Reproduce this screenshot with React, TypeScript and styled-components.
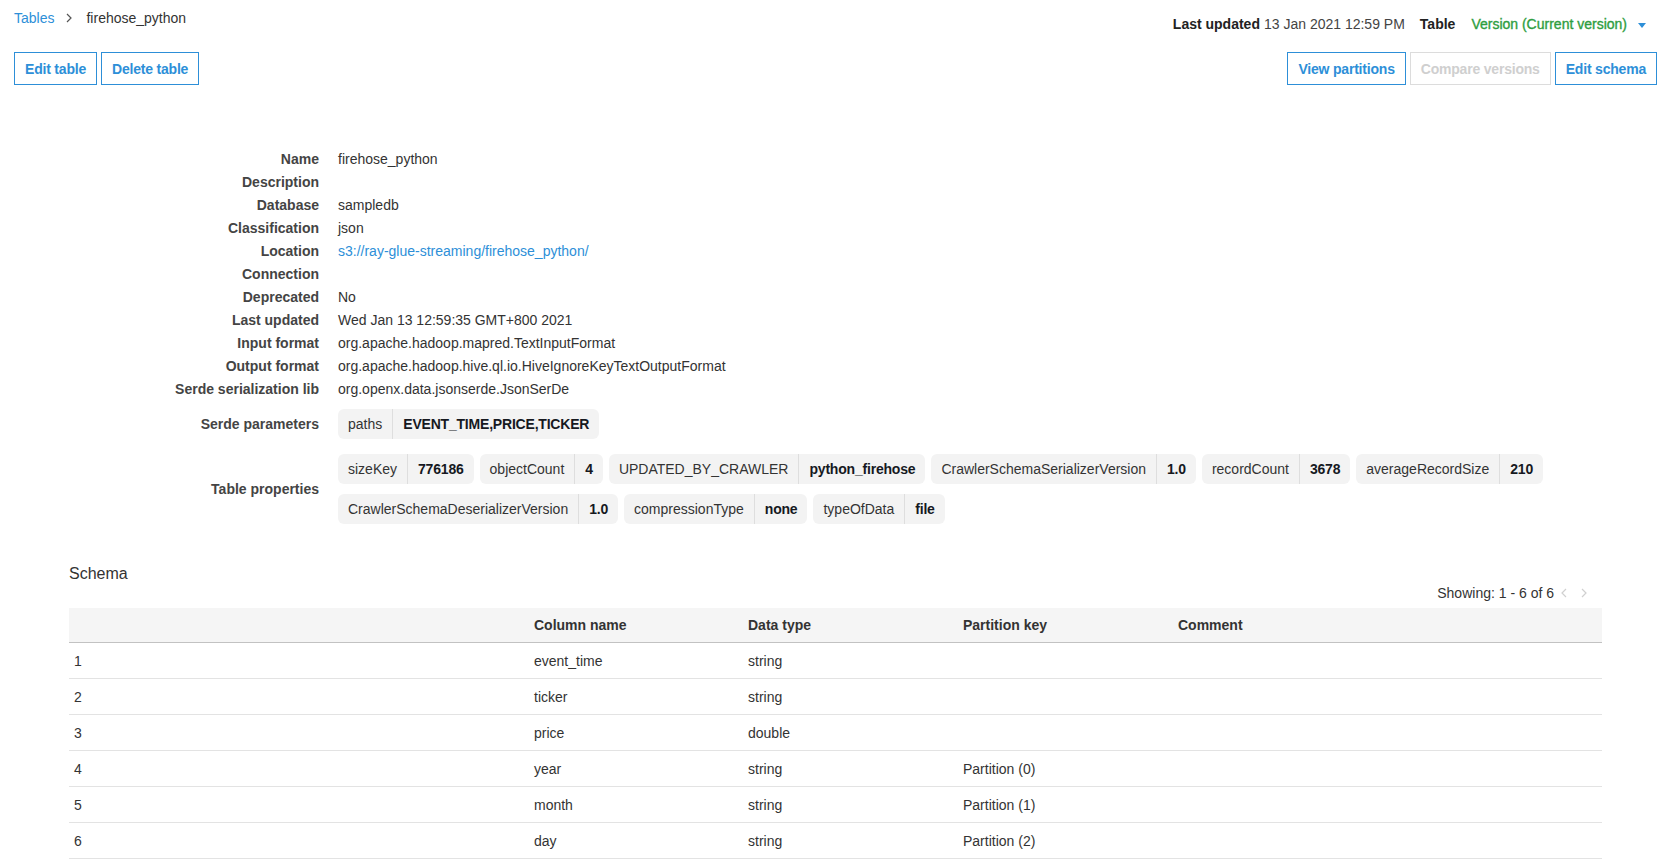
import React from 'react';
import styled, { createGlobalStyle } from 'styled-components';

const GlobalStyle = createGlobalStyle`
  html, body {
    margin: 0;
    padding: 0;
    background: #fff;
  }
  body {
    font-family: "Liberation Sans", Arial, sans-serif;
    font-size: 14px;
    color: #333;
  }
`;

const BLUE = '#2d8fd8';

const Page = styled.div`
  padding: 0 10px 0 14px;
`;

const TopBar = styled.div`
  display: flex;
  justify-content: space-between;
  align-items: flex-start;
`;

const Breadcrumb = styled.div`
  display: flex;
  align-items: center;
  padding-top: 10px;
  line-height: 16px;
`;

const Crumb = styled.a`
  color: ${BLUE};
  text-decoration: none;
`;

const CrumbSep = styled.span`
  display: inline-flex;
  margin: 0 14px 0 12px;
`;

const Current = styled.span`
  color: #333;
`;

const Meta = styled.div`
  display: flex;
  align-items: center;
  padding: 16px 11px 0 0;
  line-height: 16px;
  color: #444;
`;

const MetaItem = styled.span<{ $gap?: number }>`
  margin-left: ${p => p.$gap ?? 0}px;
`;

const Strong = styled.b`
  color: #222;
  font-weight: bold;
`;

const VersionPick = styled.span`
  color: #2e9e3f;
  -webkit-text-stroke: 0.35px #2e9e3f;
  margin-left: 16px;
  display: inline-flex;
  align-items: center;
`;

const Caret = styled.span`
  display: inline-block;
  margin-left: 11px;
  width: 0;
  height: 0;
  border-left: 4.5px solid transparent;
  border-right: 4.5px solid transparent;
  border-top: 5px solid ${BLUE};
  margin-top: 2px;
`;

const Actions = styled.div`
  display: flex;
  justify-content: space-between;
  margin-top: 20px;
`;

const ButtonGroup = styled.div`
  display: flex;
  gap: 4px;
`;

const Button = styled.button<{ $disabled?: boolean }>`
  height: 33px;
  padding: 0 10px;
  background: #fff;
  font-family: inherit;
  font-size: 14px;
  font-weight: bold;
  letter-spacing: -0.2px;
  color: ${p => (p.$disabled ? '#cfcfcf' : BLUE)};
  border: 1px solid ${p => (p.$disabled ? '#dcdcdc' : BLUE)};
  border-radius: 0;
  cursor: ${p => (p.$disabled ? 'default' : 'pointer')};
`;

const Details = styled.div`
  display: grid;
  grid-template-columns: 305px 1fr;
  column-gap: 19px;
  margin-top: 63px;
  line-height: 23px;
`;

const Label = styled.div<{ $pt?: number }>`
  text-align: right;
  font-weight: bold;
  color: #444;
  align-self: center;
  padding-top: ${p => p.$pt ?? 0}px;
`;

const Value = styled.div`
  color: #333;
  min-height: 23px;
`;

const Link = styled.a`
  color: ${BLUE};
  text-decoration: none;
`;

const ChipList = styled.div<{ $pt: number }>`
  display: flex;
  flex-wrap: wrap;
  gap: 10px 6px;
  padding-top: ${p => p.$pt}px;
`;

const Chip = styled.div`
  display: flex;
  height: 30px;
  background: #f3f3f3;
  border-radius: 6px;
  line-height: 30px;
`;

const ChipKey = styled.span`
  padding: 0 10px;
  color: #333;
  border-right: 1px solid #dedede;
`;

const ChipVal = styled.span`
  padding: 0 10px;
  font-weight: bold;
  letter-spacing: -0.2px;
  color: #16191f;
`;

const SchemaSection = styled.section`
  margin: 40px 55px 0 55px;
`;

const SchemaTitle = styled.div`
  font-size: 16px;
  line-height: 20px;
  color: #333;
`;

const Pager = styled.div`
  display: flex;
  justify-content: flex-end;
  align-items: center;
  line-height: 18px;
  padding-right: 8px;
  margin-bottom: 6px;
  color: #333;
`;

const PageArrow = styled.span`
  display: inline-flex;
  justify-content: center;
  width: 20px;
`;

const Table = styled.table`
  width: 100%;
  border-collapse: collapse;
  table-layout: fixed;
`;

const Th = styled.th<{ $w?: number }>`
  width: ${p => (p.$w ? `${p.$w}px` : 'auto')};
  height: 34px;
  padding: 0 5px;
  background: #f5f5f5;
  border-bottom: 1px solid #c2c2c2;
  text-align: left;
  font-weight: bold;
  color: #333;
`;

const Td = styled.td`
  height: 35px;
  padding: 0 5px;
  border-bottom: 1px solid #e3e3e3;
  color: #333;
`;

const Chevron = ({ dir, color }: { dir: 'left' | 'right'; color: string }) => (
  <svg width="6" height="10" viewBox="0 0 6 10">
    <path
      d={dir === 'right' ? 'M1 1 L5 5 L1 9' : 'M5 1 L1 5 L5 9'}
      fill="none"
      stroke={color}
      strokeWidth="1.2"
    />
  </svg>
);

const details: { label: string; value?: React.ReactNode }[] = [
  { label: 'Name', value: 'firehose_python' },
  { label: 'Description' },
  { label: 'Database', value: 'sampledb' },
  { label: 'Classification', value: 'json' },
  { label: 'Location', value: <Link href="#">s3://ray-glue-streaming/firehose_python/</Link> },
  { label: 'Connection' },
  { label: 'Deprecated', value: 'No' },
  { label: 'Last updated', value: 'Wed Jan 13 12:59:35 GMT+800 2021' },
  { label: 'Input format', value: 'org.apache.hadoop.mapred.TextInputFormat' },
  { label: 'Output format', value: 'org.apache.hadoop.hive.ql.io.HiveIgnoreKeyTextOutputFormat' },
  { label: 'Serde serialization lib', value: 'org.openx.data.jsonserde.JsonSerDe' },
];

const tableProps: [string, string][] = [
  ['sizeKey', '776186'],
  ['objectCount', '4'],
  ['UPDATED_BY_CRAWLER', 'python_firehose'],
  ['CrawlerSchemaSerializerVersion', '1.0'],
  ['recordCount', '3678'],
  ['averageRecordSize', '210'],
  ['CrawlerSchemaDeserializerVersion', '1.0'],
  ['compressionType', 'none'],
  ['typeOfData', 'file'],
];

const columns = [
  { name: 'event_time', type: 'string', part: '' },
  { name: 'ticker', type: 'string', part: '' },
  { name: 'price', type: 'double', part: '' },
  { name: 'year', type: 'string', part: 'Partition (0)' },
  { name: 'month', type: 'string', part: 'Partition (1)' },
  { name: 'day', type: 'string', part: 'Partition (2)' },
];

export default function App() {
  return (
    <Page>
      <GlobalStyle />
      <TopBar>
        <Breadcrumb>
          <Crumb href="#">Tables</Crumb>
          <CrumbSep>
            <Chevron dir="right" color="#555" />
          </CrumbSep>
          <Current>firehose_python</Current>
        </Breadcrumb>
        <Meta>
          <Strong>Last updated</Strong>
          <MetaItem $gap={4}>13 Jan 2021 12:59 PM</MetaItem>
          <MetaItem $gap={15}>
            <Strong>Table</Strong>
          </MetaItem>
          <VersionPick>
            Version (Current version)
            <Caret />
          </VersionPick>
        </Meta>
      </TopBar>

      <Actions>
        <ButtonGroup>
          <Button>Edit table</Button>
          <Button>Delete table</Button>
        </ButtonGroup>
        <ButtonGroup>
          <Button>View partitions</Button>
          <Button $disabled>Compare versions</Button>
          <Button>Edit schema</Button>
        </ButtonGroup>
      </Actions>

      <Details>
        {details.map(d => (
          <React.Fragment key={d.label}>
            <Label>{d.label}</Label>
            <Value>{d.value}</Value>
          </React.Fragment>
        ))}
        <Label $pt={8}>Serde parameters</Label>
        <ChipList $pt={8}>
          <Chip>
            <ChipKey>paths</ChipKey>
            <ChipVal>EVENT_TIME,PRICE,TICKER</ChipVal>
          </Chip>
        </ChipList>
        <Label $pt={15}>Table properties</Label>
        <ChipList $pt={15}>
          {tableProps.map(([k, v]) => (
            <Chip key={k}>
              <ChipKey>{k}</ChipKey>
              <ChipVal>{v}</ChipVal>
            </Chip>
          ))}
        </ChipList>
      </Details>

      <SchemaSection>
        <SchemaTitle>Schema</SchemaTitle>
        <Pager>
          Showing: 1 - 6 of 6
          <PageArrow>
            <Chevron dir="left" color="#d0d0d0" />
          </PageArrow>
          <PageArrow>
            <Chevron dir="right" color="#d0d0d0" />
          </PageArrow>
        </Pager>
        <Table>
          <thead>
            <tr>
              <Th $w={450}></Th>
              <Th $w={204}>Column name</Th>
              <Th $w={205}>Data type</Th>
              <Th $w={205}>Partition key</Th>
              <Th>Comment</Th>
            </tr>
          </thead>
          <tbody>
            {columns.map((c, i) => (
              <tr key={c.name}>
                <Td>{i + 1}</Td>
                <Td>{c.name}</Td>
                <Td>{c.type}</Td>
                <Td>{c.part}</Td>
                <Td></Td>
              </tr>
            ))}
          </tbody>
        </Table>
      </SchemaSection>
    </Page>
  );
}
